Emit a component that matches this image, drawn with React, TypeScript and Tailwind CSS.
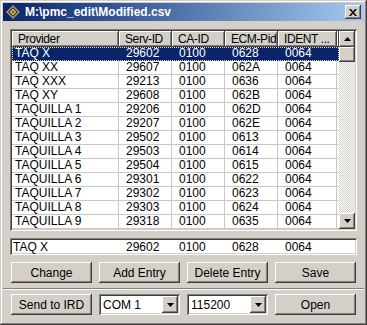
import React from "react";

const raised = "shadow-[inset_-1px_-1px_#404040,inset_1px_1px_#ffffff,inset_-2px_-2px_#808080,inset_2px_2px_#d4d0c8]";
const sunken = "shadow-[inset_1px_1px_#808080,inset_-1px_-1px_#ffffff,inset_2px_2px_#404040,inset_-2px_-2px_#d4d0c8]";

const ROWS: string[][] = [
  ["TAQ X", "29602", "0100", "0628", "0064"],
  ["TAQ XX", "29607", "0100", "062A", "0064"],
  ["TAQ XXX", "29213", "0100", "0636", "0064"],
  ["TAQ XY", "29608", "0100", "062B", "0064"],
  ["TAQUILLA 1", "29206", "0100", "062D", "0064"],
  ["TAQUILLA 2", "29207", "0100", "062E", "0064"],
  ["TAQUILLA 3", "29502", "0100", "0613", "0064"],
  ["TAQUILLA 4", "29503", "0100", "0614", "0064"],
  ["TAQUILLA 5", "29504", "0100", "0615", "0064"],
  ["TAQUILLA 6", "29301", "0100", "0622", "0064"],
  ["TAQUILLA 7", "29302", "0100", "0623", "0064"],
  ["TAQUILLA 8", "29303", "0100", "0624", "0064"],
  ["TAQUILLA 9", "29318", "0100", "0635", "0064"],
];

const HEADERS = ["Provider", "Serv-ID", "CA-ID", "ECM-Pid", "IDENT ..."];
const WIDTHS = ["w-[107px]", "w-[53px]", "w-[53px]", "w-[53px]", "w-[59px]"];

function Arrow({ up }: { up?: boolean }) {
  return (
    <svg width="7" height="4" viewBox="0 0 7 4">
      <polygon points={up ? "3.5,0 7,4 0,4" : "0,0 7,0 3.5,4"} fill="#000" />
    </svg>
  );
}

function Button({ label }: { label: string }) {
  return (
    <div className={`h-[21px] bg-[#d4d0c8] ${raised} flex items-center justify-center text-[12px] text-black whitespace-nowrap`}>{label}</div>
  );
}

function Combo({ value }: { value: string }) {
  return (
    <div className={`h-[21px] bg-white ${sunken} flex items-center pl-[4px] pr-[2px] text-[12px] text-black`}>
      <span className="flex-1">{value}</span>
      <div className={`w-[16px] h-[17px] bg-[#d4d0c8] ${raised} flex items-center justify-center`}><Arrow /></div>
    </div>
  );
}

export default function App() {
  return (
    <div className="w-[367px] h-[325px] bg-[#d4d0c8] p-[3px] flex flex-col shadow-[inset_-1px_-1px_#404040,inset_1px_1px_#d4d0c8,inset_-2px_-2px_#808080,inset_2px_2px_#ffffff]" style={{ fontFamily: '"Liberation Sans", Arial, sans-serif' }}>
      {/* Title bar */}
      <div className="h-[18px] bg-linear-to-r from-[#0a246a] to-[#a6caf0] flex items-center pl-[2px] pr-[3px]">
        <svg width="16" height="16" viewBox="0 0 16 16" className="shrink-0">
          <polygon points="8,0.5 15.5,8 8,15.5 0.5,8" fill="#9c9c9c" stroke="#202020" />
          <polygon points="8,3 13,8 8,13 3,8" fill="#3a3020" />
          <polygon points="8,4.5 11.5,8 8,11.5 4.5,8" fill="#d8b060" />
          <polygon points="8,6.5 9.5,8 8,9.5 6.5,8" fill="#6a5020" />
        </svg>
        <span className="ml-[4px] text-white font-bold text-[12px] leading-none flex-1">M:\pmc_edit\Modified.csv</span>
        <div className={`w-[16px] h-[14px] bg-[#d4d0c8] ${raised} flex items-center justify-center`}>
          <svg width="8" height="7" viewBox="0 0 8 7">
            <path d="M0 0h2l2 2.5L6 0h2L5 3.5 8 7H6L4 4.5 2 7H0l3-3.5z" fill="#000" />
          </svg>
        </div>
      </div>

      {/* List view */}
      <div className={`mt-[8px] mx-[7px] h-[202px] bg-white ${sunken} p-[2px] flex`}>
        <div className="flex-1 flex flex-col overflow-hidden">
          <div className="flex h-[16px] shrink-0">
            {HEADERS.map((h, i) => (
              <div key={h} className={`${WIDTHS[i]} shrink-0 bg-[#d4d0c8] ${raised} pl-[6px] text-[12px] leading-[16px] text-black whitespace-nowrap overflow-hidden tracking-[-0.4px]`}>{h}</div>
            ))}
            <div className={`flex-1 bg-[#d4d0c8] ${raised}`} />
          </div>
          {ROWS.map((r, ri) => (
            <div key={ri} className={`flex h-[14px] shrink-0 ${ri === 0 ? "bg-[#0a246a] text-white outline outline-1 outline-dotted outline-[#e0d8a0] -outline-offset-1" : "text-black border-b border-[#c8c8c8]"}`}>
              {r.map((c, ci) => (
                <div key={ci} className={`${WIDTHS[ci]} shrink-0 text-[12px] leading-[13px] whitespace-nowrap overflow-hidden ${ci === 0 ? "pl-[3px]" : "pl-[7px]"} ${ri !== 0 ? "border-r border-[#c8c8c8]" : ""}`}>{c}</div>
              ))}
            </div>
          ))}
        </div>
        {/* Scrollbar */}
        <div className="w-[16px] flex flex-col">
          <div className={`h-[16px] bg-[#d4d0c8] ${raised} flex items-center justify-center`}><Arrow up /></div>
          <div className={`h-[15px] bg-[#d4d0c8] ${raised}`} />
          <div className="flex-1 bg-[repeating-conic-gradient(#d4d0c8_0%_25%,#ffffff_0%_50%)] bg-[length:2px_2px]" />
          <div className={`h-[16px] bg-[#d4d0c8] ${raised} flex items-center justify-center`}><Arrow /></div>
        </div>
      </div>

      {/* Edit field */}
      <div className={`mt-[7px] mx-[7px] h-[17px] bg-white ${sunken} px-[2px] flex items-center text-[12px] text-black`}>
        {ROWS[0].map((c, ci) => (
          <div key={ci} className={`${WIDTHS[ci]} shrink-0 whitespace-nowrap ${ci === 0 ? "pl-[1px]" : "pl-[7px]"}`}>{c}</div>
        ))}
      </div>

      <div className="mt-[7px] mx-[8px] grid grid-cols-4 gap-[7px]">
        <Button label="Change" />
        <Button label="Add Entry" />
        <Button label="Delete Entry" />
        <Button label="Save" />
      </div>

      <div className="mt-[5px] border-t border-[#808080] border-b border-b-white" />

      <div className="mt-[4px] mx-[8px] grid grid-cols-4 gap-[7px]">
        <Button label="Send to IRD" />
        <Combo value="COM 1" />
        <Combo value="115200" />
        <Button label="Open" />
      </div>
    </div>
  );
}
